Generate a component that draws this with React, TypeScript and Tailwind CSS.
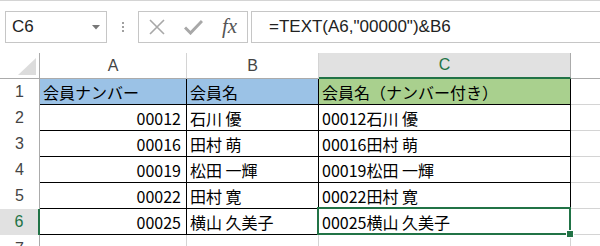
import React from "react";

const rows = [
  { n: 1, a: "会員ナンバー", b: "会員名", c: "会員名（ナンバー付き）", head: true },
  { n: 2, a: "00012", b: "石川 優", c: "00012石川 優" },
  { n: 3, a: "00016", b: "田村 萌", c: "00016田村 萌" },
  { n: 4, a: "00019", b: "松田 一輝", c: "00019松田 一輝" },
  { n: 5, a: "00022", b: "田村 寛", c: "00022田村 寛" },
  { n: 6, a: "00025", b: "横山 久美子", c: "00025横山 久美子" },
];

const cellFont = { fontFamily: '"Noto Sans CJK JP", "Noto Sans", sans-serif' };

export default function App() {
  return (
    <div className="w-[600px] h-[246px] overflow-hidden bg-white text-black">
      {/* Formula bar */}
      <div className="h-[53px] border-t border-[#d4d4d4] flex items-start pt-[10px] font-['Liberation_Sans',sans-serif]">
        <div className="ml-[5px] w-[102px] h-[32px] border border-[#c6c6c6] flex items-center justify-between pl-[6px] pr-[6px]">
          <span className="text-[17px] text-[#222]">C6</span>
          <svg width="8" height="5" viewBox="0 0 8 5"><path d="M0 0h8L4 4.5z" fill="#777" /></svg>
        </div>
        <div className="w-[31px] h-[32px] flex flex-col items-center justify-center gap-[2px]">
          <span className="w-[2px] h-[2px] bg-[#a0a0a0]" />
          <span className="w-[2px] h-[2px] bg-[#a0a0a0]" />
          <span className="w-[2px] h-[2px] bg-[#a0a0a0]" />
        </div>
        <div className="w-[110px] h-[32px] border border-[#c6c6c6] flex items-center pl-[10px] gap-[19px]">
          <svg width="16" height="16" viewBox="0 0 16 16">
            <path d="M1 1L15 15M15 1L1 15" stroke="#a8a8a8" strokeWidth="1.6" fill="none" />
          </svg>
          <svg width="19" height="16" viewBox="0 0 19 16">
            <path d="M1 8.5L6.5 14L18 2" stroke="#a8a8a8" strokeWidth="3" fill="none" />
          </svg>
          <span className="font-['Liberation_Serif',serif] italic text-[21px] text-[#555] leading-none -mt-[2px]">fx</span>
        </div>
        <div className="ml-[3px] flex-1 h-[32px] border-l border-y border-[#c6c6c6] flex items-center pl-[17px]">
          <span className="text-[17px] text-[#222]">=TEXT(A6,"00000")&amp;B6</span>
        </div>
      </div>

      {/* Sheet */}
      <div className="grid grid-cols-[40px_147px_132px_252px_1fr] auto-rows-[26px] text-[16px]" style={cellFont}>
        {/* column headers */}
        <div className="relative border-r border-b border-[#ababab]">
          <svg className="absolute left-[18px] top-[5px]" width="18" height="17" viewBox="0 0 18 17">
            <path d="M18 0V17H0z" fill="#dcdcdc" />
          </svg>
        </div>
        <div className="border-r border-b border-r-[#d4d4d4] border-b-[#ababab] flex items-center justify-center text-[#444] font-['Liberation_Sans',sans-serif] text-[16px]">A</div>
        <div className="border-r border-b border-r-[#d4d4d4] border-b-[#ababab] flex items-center justify-center text-[#444] font-['Liberation_Sans',sans-serif] text-[16px]">B</div>
        <div className="bg-[#e1e1e1] border-r border-r-[#ababab] border-b-2 border-b-[#217346] flex items-center justify-center text-[#217346] font-['Liberation_Sans',sans-serif] text-[16px]">C</div>
        <div className="border-b border-[#ababab]" />

        {rows.map((r) => {
          const sel = r.n === 6;
          return (
            <React.Fragment key={r.n}>
              <div
                className={
                  sel
                    ? "bg-[#e1e1e1] border-r-2 border-[#217346] flex items-center justify-center text-[#217346] font-['Liberation_Sans',sans-serif] text-[16px]"
                    : "border-r border-[#ababab] flex items-center justify-center text-[#444] font-['Liberation_Sans',sans-serif] text-[16px]"
                }
              >
                {r.n}
              </div>
              <div
                className={
                  "border-r border-b border-black flex items-center whitespace-nowrap " +
                  (r.head ? "bg-[#9bc2e6] pl-[3px]" : "justify-end pr-[5px]")
                }
              >
                {r.a}
              </div>
              <div className={"border-r border-b border-black flex items-center pl-[3px] whitespace-nowrap " + (r.head ? "bg-[#9bc2e6]" : "")}>
                {r.b}
              </div>
              <div className={"relative border-r border-b border-black flex items-center pl-[3px] whitespace-nowrap " + (r.head ? "bg-[#a9d08e]" : "")}>
                {r.c}
                {sel && (
                  <div className="absolute -left-[2px] -top-[2px] -right-[1px] -bottom-[1px] border-2 border-[#217346]">
                    <div className="absolute -right-[4px] -bottom-[4px] w-[6px] h-[6px] bg-[#217346] outline outline-1 outline-white" />
                  </div>
                )}
              </div>
              <div className="border-b border-[#d4d4d4]" />
            </React.Fragment>
          );
        })}

        {/* row 7, cut off by the window edge as in the reference */}
        <div className="border-r border-[#ababab] flex items-start justify-center pt-[2px] text-[#444] font-['Liberation_Sans',sans-serif] text-[16px]">7</div>
        <div className="border-r border-[#d4d4d4]" />
        <div className="border-r border-[#d4d4d4]" />
        <div className="border-r border-[#d4d4d4]" />
        <div />
      </div>
    </div>
  );
}
